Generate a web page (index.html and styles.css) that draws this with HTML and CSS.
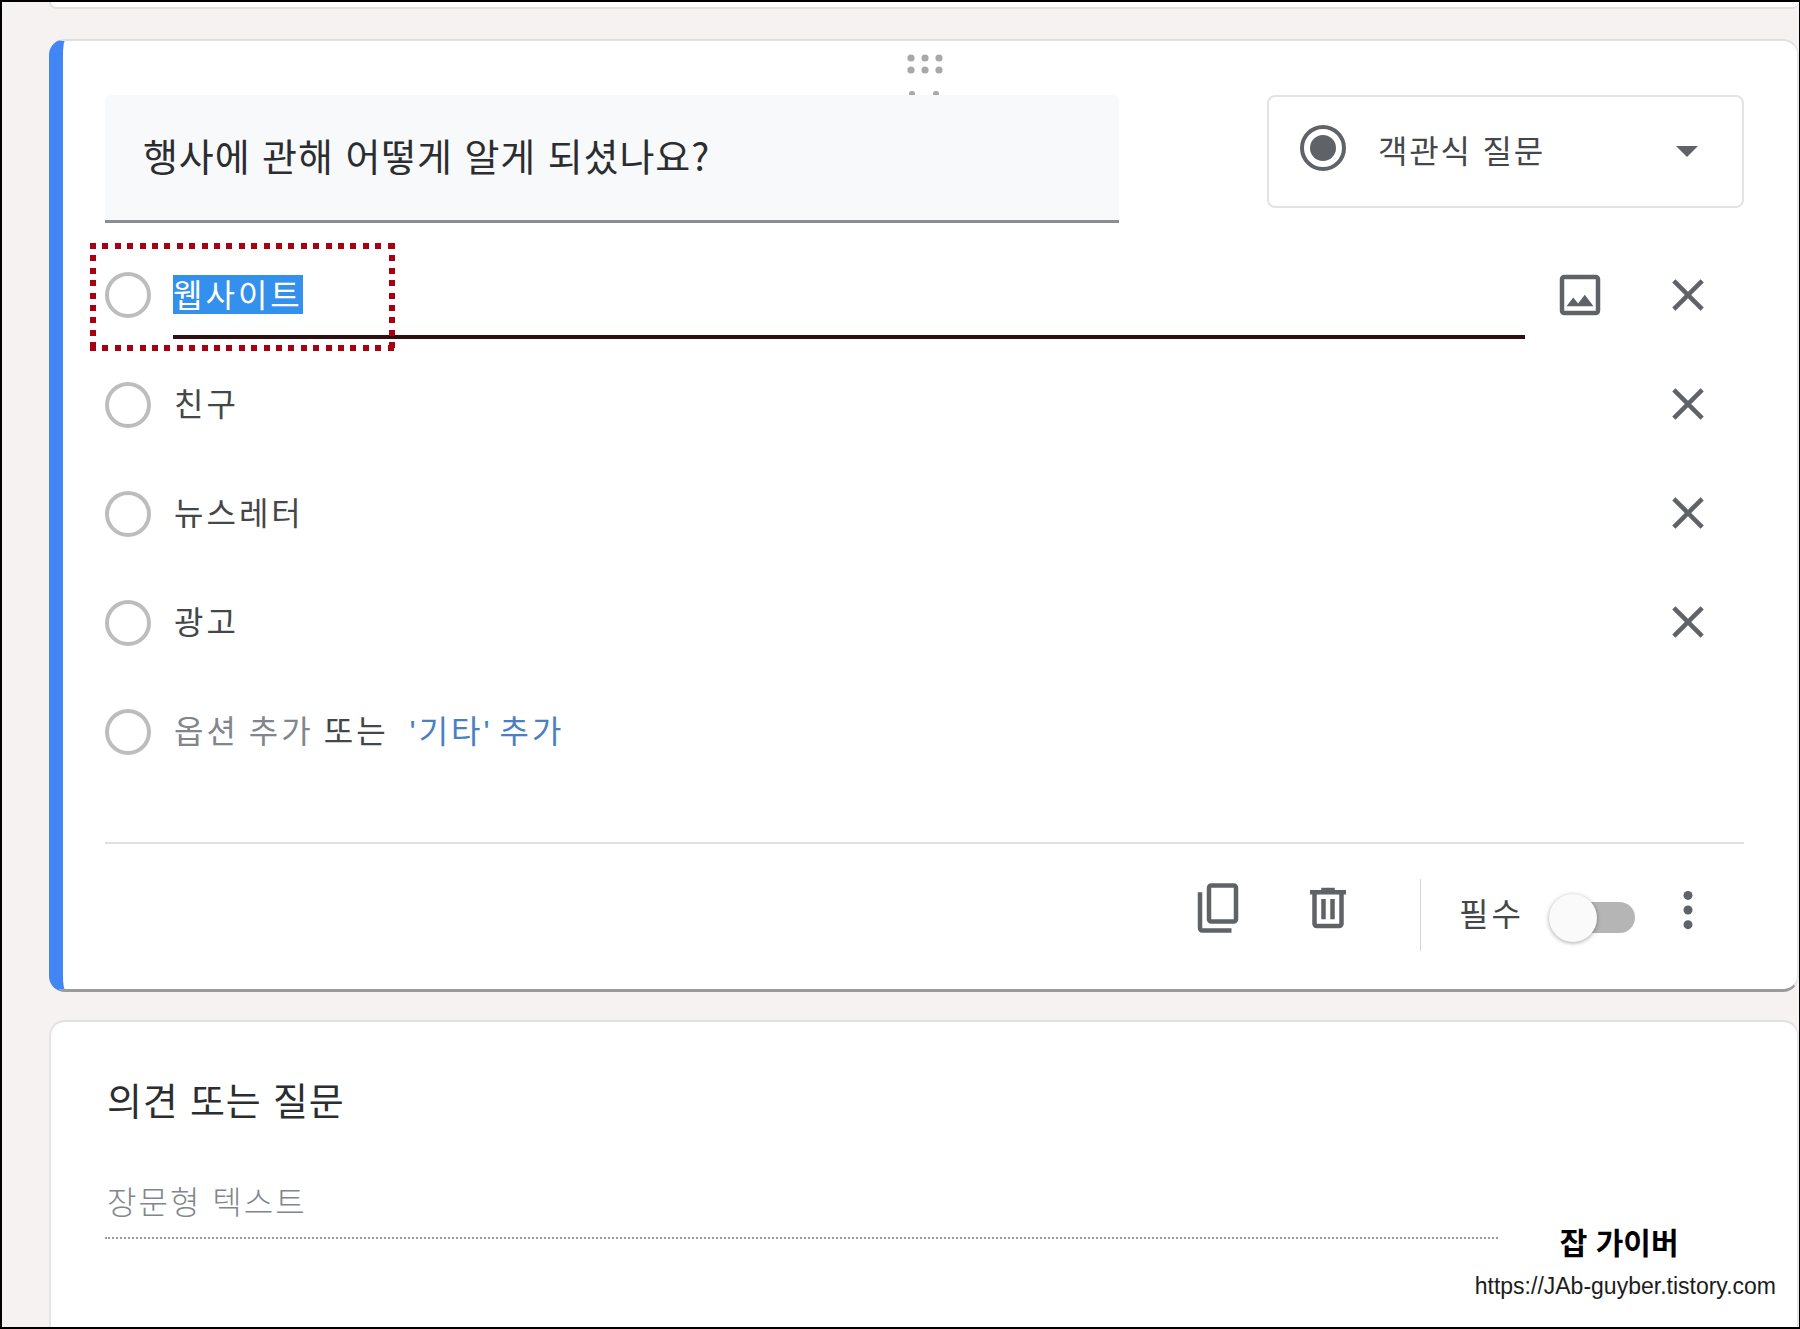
FILE: index.html
```html
<!DOCTYPE html>
<html lang="ko">

<head>
    <meta charset="UTF-8">
    <title>설문지</title>
    <link rel="stylesheet" href="styles.css">
</head>

<body>
    <div class="page">
        <div class="card-stub"></div>

        <section class="card card-active">
            <div class="drag-handle">
                <svg width="44" height="48" viewBox="0 0 44 48" fill="#a8a8a8">
                    <circle cx="8" cy="8" r="3.6" />
                    <circle cx="22" cy="8" r="3.6" />
                    <circle cx="36" cy="8" r="3.6" />
                    <circle cx="8" cy="20" r="3.6" />
                    <circle cx="22" cy="20" r="3.6" />
                    <circle cx="36" cy="20" r="3.6" />
                    <circle cx="9" cy="44" r="3" />
                    <circle cx="33" cy="44" r="3" />
                </svg>
            </div>

            <div class="question-head">
                <div class="question-title">행사에 관해 어떻게 알게 되셨나요?</div>
                <div class="type-select">
                    <span class="type-radio"></span>
                    <span class="type-name">객관식 질문</span>
                    <span class="type-arrow"></span>
                </div>
            </div>

            <div class="options">
                <div class="option">
                    <span class="radio"></span>
                    <div class="option-field">
                        <span class="selected-text">웹사이트</span>
                    </div>
                    <svg class="icon option-image" viewBox="0 0 24 24">
                        <path d="M19 5v14H5V5h14m0-2H5c-1.1 0-2 .9-2 2v14c0 1.1.9 2 2 2h14c1.1 0 2-.9 2-2V5c0-1.1-.9-2-2-2zm-4.86 8.86l-3 3.87L9 13.14 6 17h12l-3.86-5.14z" />
                    </svg>
                    <svg class="icon option-remove" viewBox="0 0 24 24">
                        <path d="M19 6.41L17.59 5 12 10.59 6.41 5 5 6.41 10.59 12 5 17.59 6.41 19 12 13.41 17.59 19 19 17.59 13.41 12z" />
                    </svg>
                    <div class="highlight-box"></div>
                </div>

                <div class="option">
                    <span class="radio"></span>
                    <span class="option-text">친구</span>
                    <svg class="icon option-remove" viewBox="0 0 24 24">
                        <path d="M19 6.41L17.59 5 12 10.59 6.41 5 5 6.41 10.59 12 5 17.59 6.41 19 12 13.41 17.59 19 19 17.59 13.41 12z" />
                    </svg>
                </div>

                <div class="option">
                    <span class="radio"></span>
                    <span class="option-text">뉴스레터</span>
                    <svg class="icon option-remove" viewBox="0 0 24 24">
                        <path d="M19 6.41L17.59 5 12 10.59 6.41 5 5 6.41 10.59 12 5 17.59 6.41 19 12 13.41 17.59 19 19 17.59 13.41 12z" />
                    </svg>
                </div>

                <div class="option">
                    <span class="radio"></span>
                    <span class="option-text">광고</span>
                    <svg class="icon option-remove" viewBox="0 0 24 24">
                        <path d="M19 6.41L17.59 5 12 10.59 6.41 5 5 6.41 10.59 12 5 17.59 6.41 19 12 13.41 17.59 19 19 17.59 13.41 12z" />
                    </svg>
                </div>

                <div class="option">
                    <span class="radio"></span>
                    <span class="option-text">
                        <span class="muted">옵션 추가</span> 또는 <span class="link">'기타' 추가</span>
                    </span>
                </div>
            </div>

            <div class="card-footer">
                <svg class="icon footer-copy" viewBox="0 0 24 24">
                    <path d="M3 5v16c0 1.1.9 2 2 2h13v-2H5V5H3z" />
                    <path d="M21 3c0-1.1-.9-2-2-2H9c-1.1 0-2 .9-2 2v14c0 1.1.9 2 2 2h10c1.1 0 2-.9 2-2V3zm-2 14H9V3h10v14z" />
                </svg>
                <svg class="icon footer-trash" viewBox="0 0 24 24">
                    <path d="M15 4V3H9v1H4v2h1v13c0 1.1.9 2 2 2h10c1.1 0 2-.9 2-2V6h1V4h-5zm2 15H7V6h10v13z" />
                    <path d="M9 8h2v9H9zm4 0h2v9h-2z" />
                </svg>
                <span class="footer-divider"></span>
                <span class="required-label">필수</span>
                <span class="toggle"><span class="toggle-thumb"></span></span>
                <svg class="icon footer-more" viewBox="0 0 24 24">
                    <circle cx="12" cy="5.5" r="2" />
                    <circle cx="12" cy="12" r="2" />
                    <circle cx="12" cy="18.5" r="2" />
                </svg>
            </div>
        </section>

        <section class="card card-plain">
            <div class="plain-title">의견 또는 질문</div>
            <div class="plain-answer">장문형 텍스트</div>
        </section>

        <div class="watermark">
            <div class="watermark-name">잡 가이버</div>
            <div class="watermark-url">https://JAb-guyber.tistory.com</div>
        </div>
    </div>
</body>

</html>
```

FILE: styles.css
```css
* {
    box-sizing: border-box;
}

body {
    margin: 0;
    font-family: "Noto Sans CJK KR", "Noto Sans", sans-serif;
    color: #202124;
}

.page {
    position: relative;
    width: 1800px;
    height: 1329px;
    border: 2px solid #000000;
    border-right-width: 1px;
    background: #f6f2f1;
    overflow: hidden;
}

.card-stub {
    height: 7px;
    margin-left: 47px;
    background: #ffffff;
    border: 2px solid #e2e2e2;
    border-top: none;
    border-right: none;
    border-radius: 0 0 14px 14px;
}

.card {
    background: #ffffff;
    border: 2px solid #e0e0e0;
    border-right: 2px solid #e6e6e6;
    border-radius: 16px;
    margin: 28px 0 0 47px;
}

/* question being edited */
.card-active {
    margin-top: 30px;
    border-left: 14px solid #4285f4;
    border-bottom: 3px solid #9b9b9b;
    padding: 0 53px 6px 42px;
}

.drag-handle {
    display: flex;
    justify-content: center;
    height: 54px;
    padding-top: 9px;
}

.question-head {
    display: flex;
    justify-content: space-between;
    position: relative;
}

.question-title {
    width: 1014px;
    height: 128px;
    background: #f8f9fa;
    border-bottom: 3px solid #8a8e92;
    border-radius: 6px 6px 0 0;
    padding-left: 38px;
    font-size: 38px;
    line-height: 120px;
    letter-spacing: 0.9px;
    color: #2b2d30;
}

.type-select {
    display: flex;
    align-items: center;
    width: 477px;
    height: 113px;
    border: 2px solid #e3e3e3;
    border-radius: 8px;
    padding-left: 31px;
}

.type-radio {
    position: relative;
    width: 46px;
    height: 46px;
    border: 4px solid #5f6368;
    border-radius: 50%;
    margin-top: -8px;
}

.type-radio::after {
    content: "";
    position: absolute;
    inset: 6px;
    background: #5f6368;
    border-radius: 50%;
}

.type-name {
    margin-left: 32px;
    font-size: 32px;
    letter-spacing: 1.8px;
    color: #44474a;
    margin-top: -5px;
}

.type-arrow {
    margin-left: auto;
    margin-right: 44px;
    border-top: 11px solid #5f6368;
    border-left: 11px solid transparent;
    border-right: 11px solid transparent;
}

.options {
    margin-top: 18px;
}

.option {
    position: relative;
    display: flex;
    align-items: center;
    height: 109px;
    font-size: 32px;
}

.radio {
    flex: none;
    width: 46px;
    height: 46px;
    border: 4px solid #bdbdbd;
    border-radius: 50%;
    margin-right: 22px;
    margin-top: -2px;
}

.option + .option .radio {
    margin-top: 1px;
}

.option-field {
    display: flex;
    align-items: center;
    width: 1352px;
    height: 85px;
    border-bottom: 4px solid #2e1010;
    margin-top: 2px;
}

.selected-text {
    background: #3390ec;
    color: #ffffff;
    width: 130px;
    height: 39px;
    line-height: 36px;
    letter-spacing: 3px;
    white-space: nowrap;
}

.option-text {
    letter-spacing: 3px;
    word-spacing: -2px;
    margin-left: 1px;
    margin-top: -6px;
    color: #44474a;
}

.muted {
    color: #80868b;
}

.link {
    font-family: "Liberation Sans", "Noto Sans CJK KR", sans-serif;
    color: #4a7fc1;
    margin-left: 11px;
    word-spacing: -5px;
}

.icon {
    flex: none;
    width: 54px;
    height: 54px;
    fill: #5f6368;
}

.option-image {
    margin-left: 28px;
    margin-top: -2px;
}

.option-remove {
    margin-left: auto;
    margin-right: 29px;
    margin-top: -2px;
}

.highlight-box {
    position: absolute;
    left: -15px;
    top: 2px;
    width: 305px;
    height: 108px;
    background:
        repeating-linear-gradient(90deg, #a80010 0 6px, transparent 6px 12.4px) left top / 100% 6px no-repeat,
        repeating-linear-gradient(90deg, #a80010 0 6px, transparent 6px 12.4px) left bottom / 100% 6px no-repeat,
        repeating-linear-gradient(180deg, #a80010 0 6px, transparent 6px 12.4px) left top / 6px 100% no-repeat,
        repeating-linear-gradient(180deg, #a80010 0 6px, transparent 6px 12.4px) right top / 6px 100% no-repeat;
}

.card-footer {
    display: flex;
    align-items: center;
    height: 141px;
    margin-top: 56px;
    padding-bottom: 2px;
    border-top: 2px solid #e0e0e0;
}

.footer-copy {
    margin-left: 1086px;
    margin-top: -10px;
}

.footer-trash {
    margin-left: 56px;
    margin-top: -10px;
}

.footer-divider {
    width: 1px;
    height: 72px;
    background: #d4d4d4;
    margin-left: 65px;
    margin-top: 4px;
}

.required-label {
    margin-left: 38px;
    font-size: 32px;
    letter-spacing: 3px;
    color: #44474a;
    margin-top: -2px;
}

.toggle {
    position: relative;
    width: 74px;
    height: 31px;
    margin-left: 37px;
    margin-top: 10px;
    background: #b5b5b5;
    border-radius: 16px;
}

.toggle-thumb {
    position: absolute;
    left: -12px;
    top: -8px;
    width: 48px;
    height: 48px;
    background: #fafafa;
    border-radius: 50%;
    box-shadow: 0 1px 4px rgba(0, 0, 0, 0.35);
}

.footer-more {
    margin-left: 26px;
    margin-top: -6px;
}

/* read-only question below */
.card-plain {
    height: 340px;
    border-left-color: #e4e4e4;
    padding: 52px 0 0 54px;
}

.plain-title {
    margin-left: 2px;
    font-size: 38px;
    line-height: 50px;
    letter-spacing: 0.8px;
    color: #2b2d30;
}

.plain-answer {
    width: 1393px;
    margin-top: 51px;
    padding-bottom: 12px;
    border-bottom: 2px dotted #9a9a9a;
    font-size: 32px;
    font-weight: 300;
    line-height: 50px;
    letter-spacing: 2px;
    color: #80868b;
    text-indent: 2px;
}

.watermark {
    position: absolute;
    right: 23px;
    bottom: 26px;
    color: #000000;
}

.watermark-name {
    margin-left: 85px;
    font-size: 30px;
    font-weight: bold;
    line-height: 40px;
}

.watermark-url {
    margin-top: 10px;
    font-family: "Liberation Sans", sans-serif;
    font-size: 23px;
    line-height: 30px;
    color: #1c1c1c;
}
```
